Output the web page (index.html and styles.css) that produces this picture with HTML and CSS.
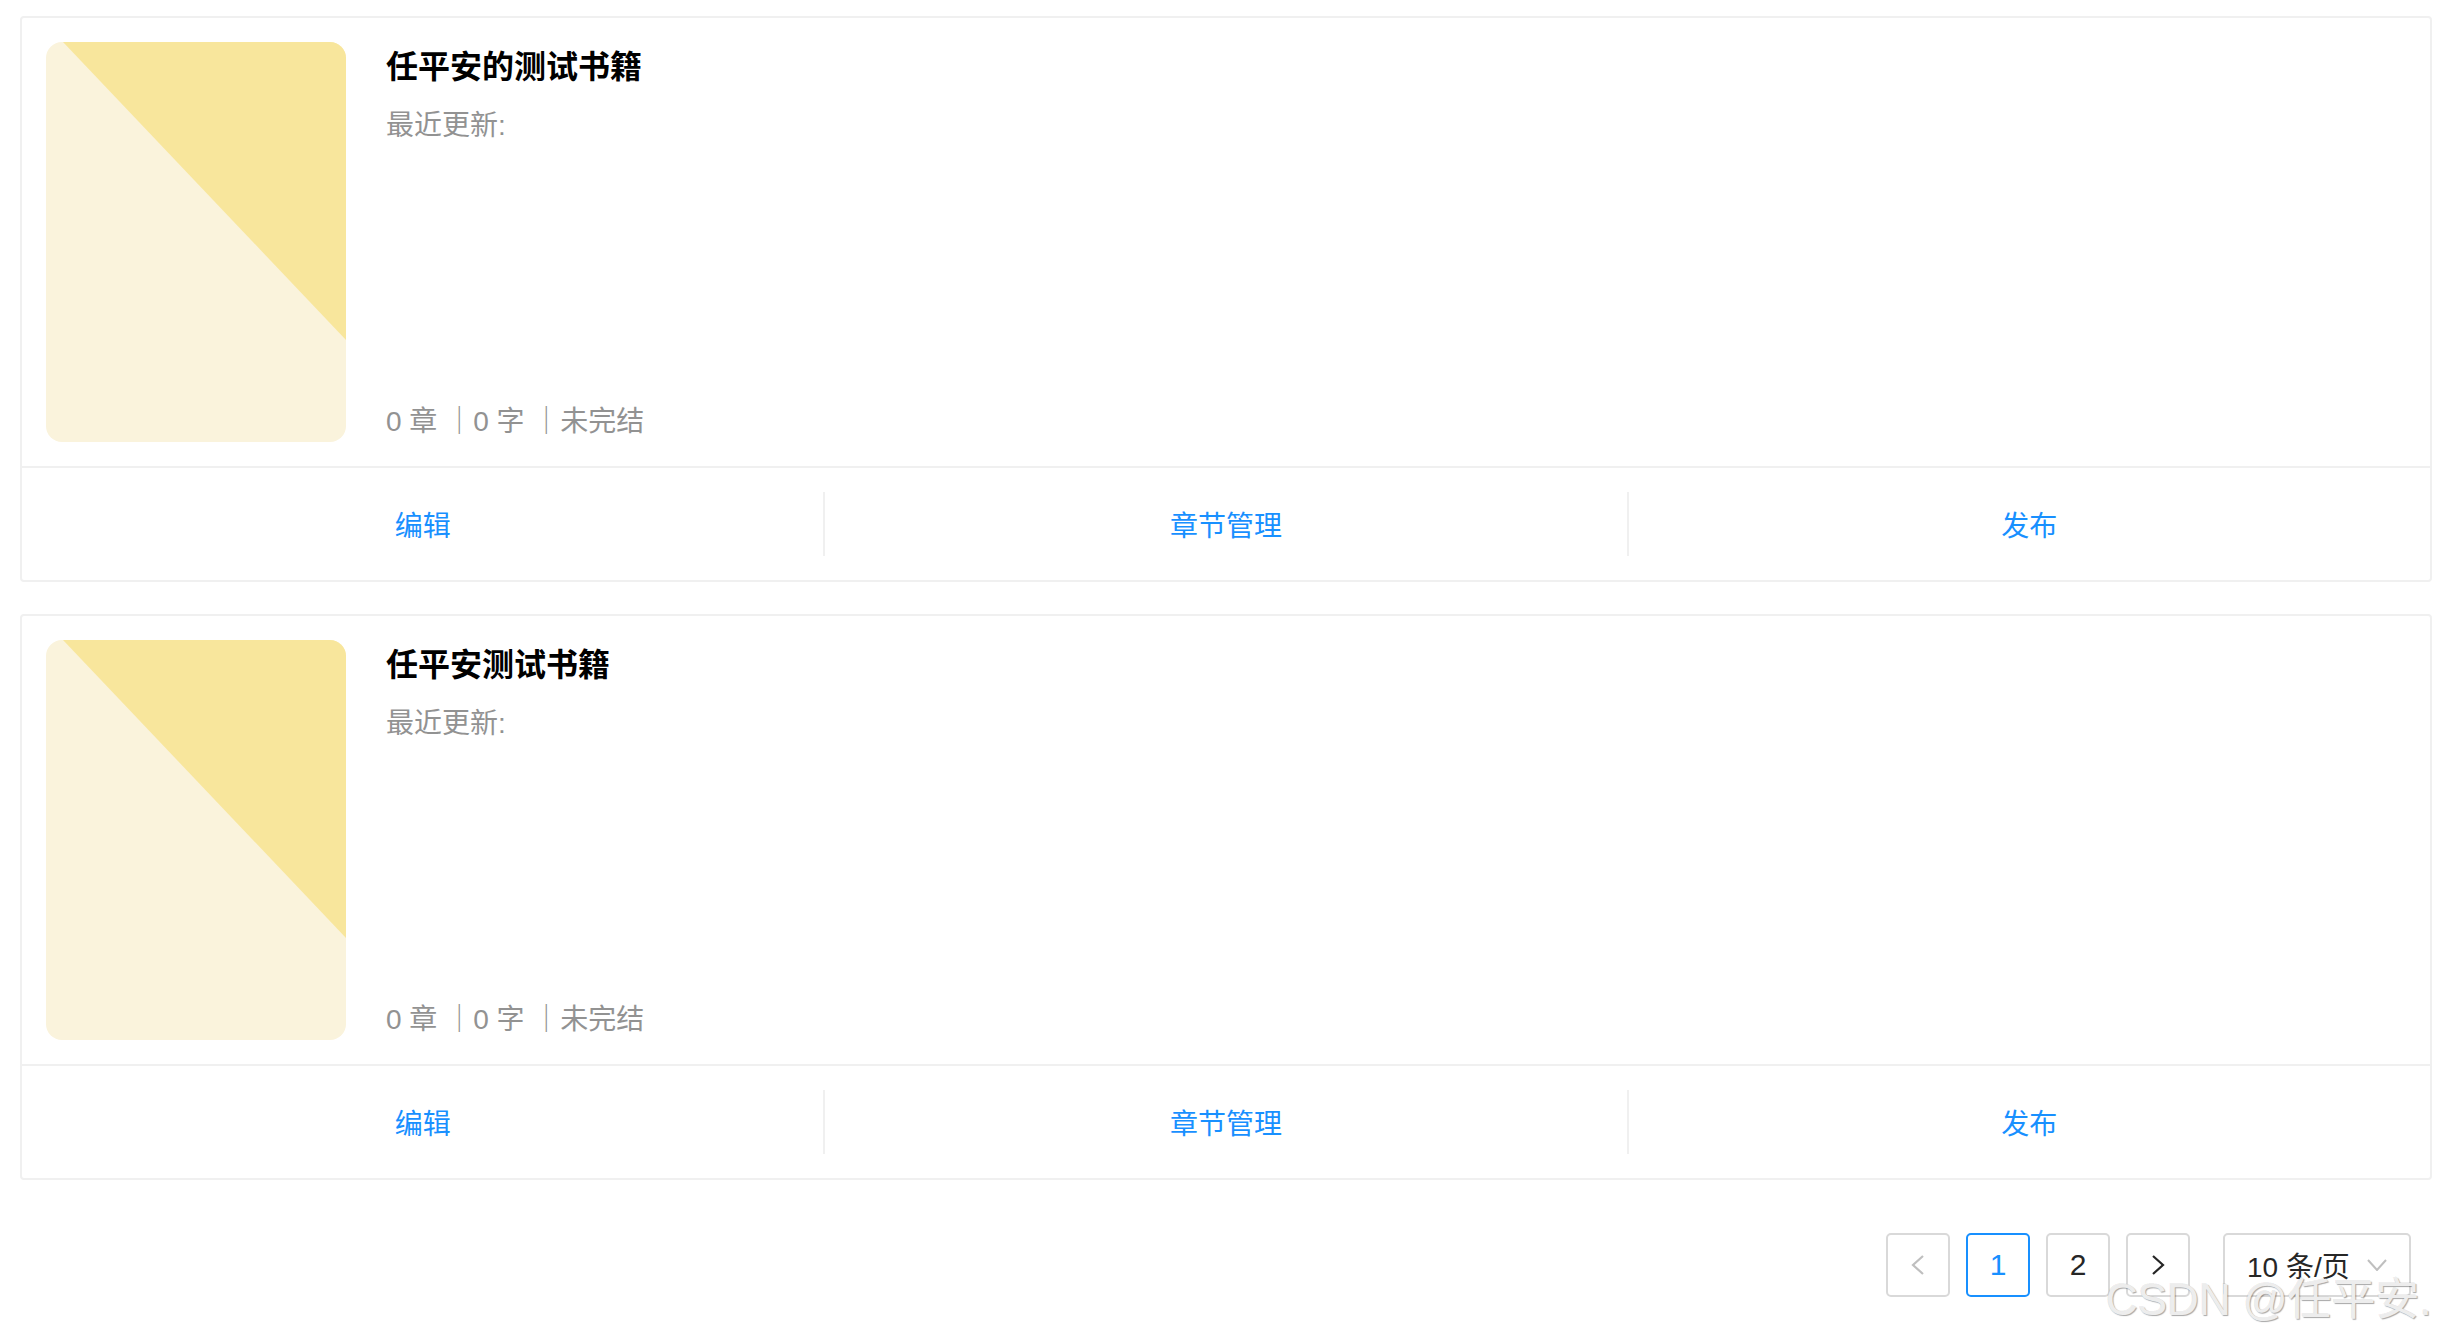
FILE: index.html
```html
<!DOCTYPE html>
<html lang="zh-CN">
<head>
<meta charset="utf-8">
<title>书籍列表</title>
<link rel="stylesheet" href="styles.css">
</head>
<body>
<div class="page">
  <div class="book-list">
    <div class="book-card">
      <div class="book-body">
        <div class="cover">
          <svg width="300" height="400" viewBox="0 0 300 400"><rect width="300" height="400" fill="#faf3dc"/><polygon points="17,0 300,0 300,298" fill="#f8e69c"/></svg>
        </div>
        <div class="info">
          <div class="info-top">
            <div class="title">任平安的测试书籍</div>
            <div class="updated">最近更新:</div>
          </div>
          <div class="meta">0 章 ｜0 字 ｜未完结</div>
        </div>
      </div>
      <ul class="actions">
        <li><span>编辑</span></li>
        <li><span>章节管理</span></li>
        <li><span>发布</span></li>
      </ul>
    </div>
    <div class="book-card">
      <div class="book-body">
        <div class="cover">
          <svg width="300" height="400" viewBox="0 0 300 400"><rect width="300" height="400" fill="#faf3dc"/><polygon points="17,0 300,0 300,298" fill="#f8e69c"/></svg>
        </div>
        <div class="info">
          <div class="info-top">
            <div class="title">任平安测试书籍</div>
            <div class="updated">最近更新:</div>
          </div>
          <div class="meta">0 章 ｜0 字 ｜未完结</div>
        </div>
      </div>
      <ul class="actions">
        <li><span>编辑</span></li>
        <li><span>章节管理</span></li>
        <li><span>发布</span></li>
      </ul>
    </div>
  </div>
  <div class="pagination">
    <div class="pg-item pg-disabled">
      <svg width="14" height="20" viewBox="0 0 14 20"><polyline points="12,1 2,10 12,19" fill="none" stroke="#bfbfbf" stroke-width="2.2"/></svg>
    </div>
    <div class="pg-item pg-active">1</div>
    <div class="pg-item">2</div>
    <div class="pg-item">
      <svg width="14" height="20" viewBox="0 0 14 20"><polyline points="2,1 12,10 2,19" fill="none" stroke="#262626" stroke-width="2.2"/></svg>
    </div>
    <div class="pg-size">
      <span>10 条/页</span>
      <svg width="20" height="12" viewBox="0 0 20 12"><polyline points="1,1 10,11 19,1" fill="none" stroke="#bfbfbf" stroke-width="2"/></svg>
    </div>
  </div>
</div>
<div class="watermark">CSDN @任平安.</div>
</body>
</html>
```

FILE: styles.css
```css
html, body {
  margin: 0;
  padding: 0;
  background: #fff;
}
body {
  font-family: "Liberation Sans", "Noto Sans CJK SC", sans-serif;
  color: #262626;
  width: 2442px;
  height: 1338px;
  overflow: hidden;
  position: relative;
}
.page {
  padding: 16px 10px 0 20px;
}
.book-list {
  display: flex;
  flex-direction: column;
  gap: 32px;
}
.book-card {
  border: 2px solid #f0f0f0;
  border-radius: 4px;
  background: #fff;
}
.book-body {
  display: flex;
  gap: 40px;
  padding: 24px;
}
.cover {
  width: 300px;
  height: 400px;
  border-radius: 16px;
  overflow: hidden;
  flex: none;
}
.cover svg {
  display: block;
}
.info {
  display: flex;
  flex-direction: column;
  justify-content: space-between;
  height: 400px;
}
.title {
  font-size: 32px;
  line-height: 50px;
  font-weight: 700;
  color: #000;
}
.updated {
  font-size: 28px;
  line-height: 44px;
  margin-top: 12px;
  color: #929292;
}
.meta {
  font-size: 28px;
  line-height: 44px;
  margin-bottom: -2px;
  color: #929292;
}
.actions {
  list-style: none;
  margin: 0;
  padding: 0;
  display: flex;
  border-top: 2px solid #f0f0f0;
}
.actions li {
  flex: 1;
  margin: 24px 0;
  height: 64px;
  display: flex;
  align-items: center;
  justify-content: center;
  font-size: 28px;
  color: #1890ff;
}
.actions li:not(:last-child) {
  border-right: 2px solid #f0f0f0;
}
.pagination {
  display: flex;
  justify-content: flex-end;
  align-items: center;
  gap: 16px;
  margin-top: 53px;
  padding-right: 21px;
}
.pg-item {
  box-sizing: border-box;
  width: 64px;
  height: 64px;
  border: 2px solid #d9d9d9;
  border-radius: 5px;
  display: flex;
  align-items: center;
  justify-content: center;
  font-size: 30px;
  color: #262626;
}
.pg-active {
  border-color: #1890ff;
  color: #1890ff;
}
.pg-size {
  box-sizing: border-box;
  width: 188px;
  height: 64px;
  margin-left: 17px;
  border: 2px solid #d9d9d9;
  border-radius: 5px;
  display: flex;
  align-items: center;
  justify-content: space-between;
  padding: 0 22px;
  font-size: 28px;
  color: #262626;
}
.pg-size svg {
  display: block;
}
.watermark {
  position: absolute;
  left: 2106px;
  top: 1278px;
  font-family: "Liberation Sans", "Noto Sans CJK SC", sans-serif;
  font-size: 44px;
  line-height: 44px;
  white-space: nowrap;
  color: #ededed;
  text-shadow: 1px 1px 1px rgba(0, 0, 0, 0.35), -1px -1px 0 rgba(0, 0, 0, 0.08);
}
```
